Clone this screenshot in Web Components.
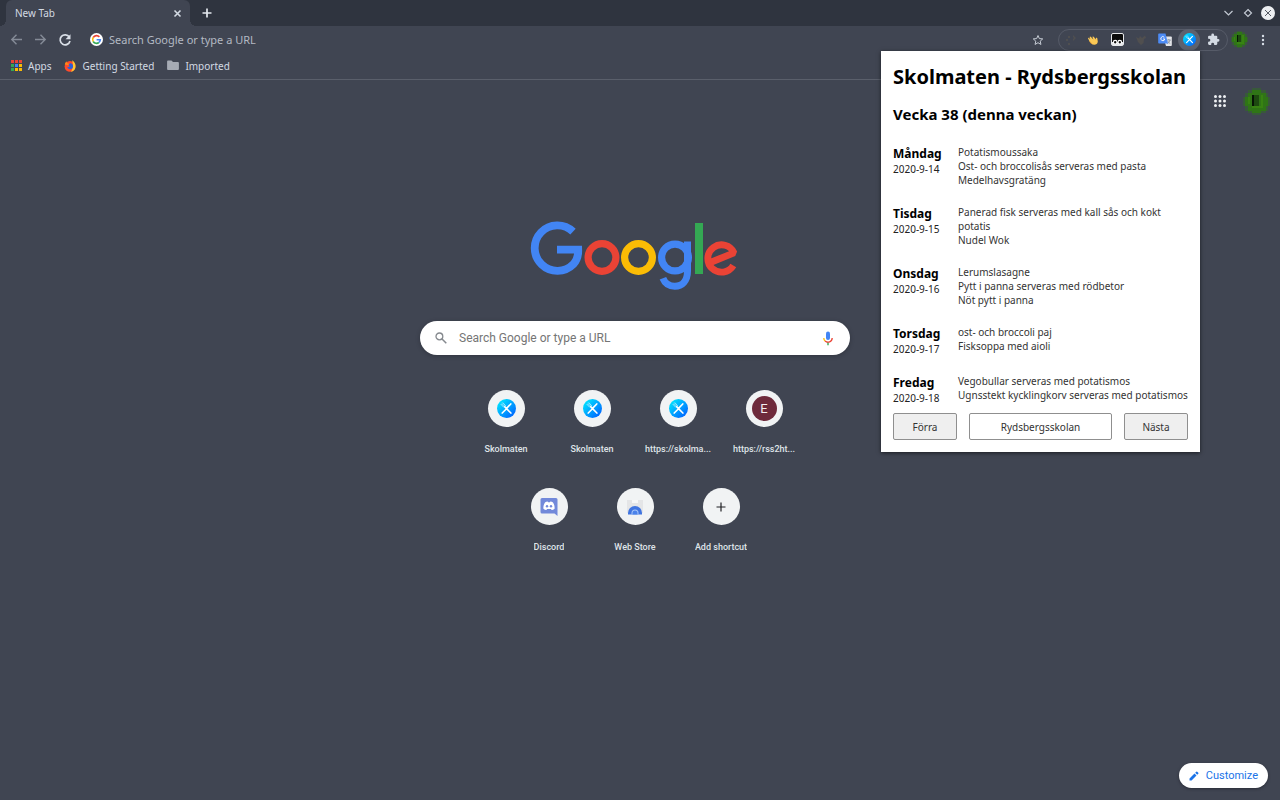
<!DOCTYPE html>
<html lang="en">
<head>
<meta charset="utf-8">
<title>New Tab</title>
<style>
  html, body { margin: 0; min-height: 100vh; }
  body {
    --bar: #404552; --frame: #2f343f; --light: #d3dae3;
    background: #404552; color: #d3dae3;
    font-family: "Noto Sans", sans-serif; font-size: 10px;
  }
</style>
</head>
<body>
<browser-window></browser-window>

<script>
const define = (name, html) => {
  const template = document.createElement('template');
  template.innerHTML = html;
  customElements.define(name, class extends HTMLElement {
    constructor() {
      super();
      this.attachShadow({ mode: 'open' }).append(template.content.cloneNode(true));
    }
  });
};

const reset = `
  :host, *, *::before, *::after { box-sizing: border-box; }
  button, input { font: inherit; color: inherit; margin: 0; padding: 0; border: 0; background: none; outline: 0; }
  button { display: inline-flex; align-items: center; justify-content: center; cursor: pointer; }
  a { color: inherit; text-decoration: none; }
  svg { display: block; flex: none; }
`;

define('pixel-avatar', `
  <style>:host { display: block; width: 18px; height: 18px; flex: none } svg { display: block; width: 100%; height: 100% }</style>
  <svg viewBox="0 0 12 12" shape-rendering="crispEdges" aria-hidden="true">
    <path fill="#38593a" d="M4 0h4v1h2v1h1v2h1v4h-1v2h-1v1H8v1H4v-1H2v-1H1V8H0V4h1V2h1V1h2z"/>
    <path fill="#2f7516" d="M4 1h4v1h2v2h1v4h-1v2H8v1H4v-1H2V8H1V4h1V2h2z"/>
    <path fill="#388312" d="M8 3h1v5H8zM4 8h5v1H4zM2 4h1v3H2z"/>
    <path fill="#1d4a10" d="M4 3h3v5H4z"/><path fill="#071506" d="M4 3h1v5H4z"/>
  </svg>`);

define('skolmaten-icon', `
  <style>:host { display: block; width: 19px; height: 19px; flex: none } svg { display: block; width: 100%; height: 100% }</style>
  <svg viewBox="0 0 20 20" aria-hidden="true">
    <defs><linearGradient id="g" x1="0" y1="0" x2="1" y2="1"><stop offset=".1" stop-color="#00e5ff"/><stop offset=".9" stop-color="#0064ff"/></linearGradient></defs>
    <circle cx="10" cy="10" r="10" fill="url(#g)"/>
    <path d="M14.5 5.200 10.500 9.400M9.200 11 5.500 14.800M8 8l6.600 6.800" stroke="#fff" stroke-width="1.700" stroke-linecap="round" fill="none"/>
    <path d="M4.200 5.600 7 8.600M5.200 4.800 8 7.600M6.300 4 9 7" stroke="#c8f4ff" stroke-width=".8" stroke-linecap="round"/>
  </svg>`);

define('tab-strip', `
  <style>${reset}
    :host { display: flex; align-items: center; height: 26px; background: var(--frame); padding: 0 5px 0 6px; }
    .tab { display: flex; align-items: center; justify-content: space-between; width: 184px; height: 26px; padding: 0 8px 0 9px;
      background: var(--bar); border-radius: 6px 6px 0 0; position: relative; }
    .tab::before, .tab::after { content: ""; position: absolute; bottom: 0; width: 6px; height: 6px; }
    .tab::before { right: 100%; background: radial-gradient(circle at 0 0, transparent 6px, var(--bar) 6px); }
    .tab::after { left: 100%; background: radial-gradient(circle at 100% 0, transparent 6px, var(--bar) 6px); }
    .new { margin-left: 11px; }
    .win { margin-left: auto; display: flex; gap: 8px; align-items: center; }
    .win button { width: 11px; }
    .win .close { width: 14px; height: 14px; border-radius: 50%; background: #eceef1; }
  </style>
  <div class="tab"><span>New Tab</span>
    <button aria-label="Close tab"><svg width="9" height="9" viewBox="0 0 9 9"><path d="M1.500 1.500l6 6m0-6l-6 6" stroke="#d3dae3" stroke-width="1.600"/></svg></button></div>
  <button class="new" aria-label="New tab"><svg width="12" height="12" viewBox="0 0 12 12"><path d="M6 1.500v9M1.500 6h9" stroke="#e3e8ee" stroke-width="1.700"/></svg></button>
  <div class="win">
    <button aria-label="Minimize"><svg width="11" height="10" viewBox="0 0 11 10"><path d="M1.500 3l4 4 4-4" fill="none" stroke="#c3c9d2" stroke-width="1.200"/></svg></button>
    <button aria-label="Maximize"><svg width="10" height="10" viewBox="0 0 10 10"><path d="M5 1.500L8.500 5 5 8.500 1.500 5z" fill="none" stroke="#c3c9d2" stroke-width="1.200"/></svg></button>
    <button class="close" aria-label="Close window"><svg width="10" height="10" viewBox="0 0 10 10"><path d="M2 2l6 6m0-6L2 8" stroke="#555a63" stroke-width="1"/></svg></button>
  </div>`);

define('tool-bar', `
  <style>${reset}
    :host { display: flex; align-items: center; height: 27px; padding: 0 10px; background: var(--bar); }
    .nav { display: flex; gap: 11px; }
    .omni { display: flex; align-items: center; flex: 1; gap: 6px; margin-left: 18px; font-size: 11px; }
    .omni input { flex: 1; min-width: 0; height: 20px; }
    .omni input::placeholder { color: #b3b9c3; opacity: 1; }
    .ext { display: flex; align-items: center; margin-left: 14px; height: 22px; padding: 0 2px; border: 1px solid #565b68; border-radius: 11px; }
    .ext button { width: 24px; height: 20px; }
    .ext button:first-child { width: 20px; }
    .ext .on { width: 22px; height: 22px; margin: 0 1px; border-radius: 50%; background: #5d626f; }
    .on skolmaten-icon { width: 13px; height: 13px; }
    pixel-avatar { width: 17px; height: 17px; }
    .me { margin-left: 3px; }
    .more { margin-left: 8px; width: 14px; }
  </style>
  <div class="nav">
    <button aria-label="Back"><svg width="13" height="13" viewBox="0 0 13 13"><path d="M12 6.500H2M6.500 1.800L1.800 6.500l4.700 4.700" fill="none" stroke="#858b97" stroke-width="1.400"/></svg></button>
    <button aria-label="Forward"><svg width="13" height="13" viewBox="0 0 13 13"><path d="M1 6.500h10M6.500 1.800l4.700 4.700-4.700 4.700" fill="none" stroke="#858b97" stroke-width="1.400"/></svg></button>
    <button aria-label="Reload"><svg width="14" height="14" viewBox="0 0 14 14"><path d="M11.300 4A5 5 0 1 0 12 8" fill="none" stroke="#d9dfe7" stroke-width="1.700"/><path d="M12.500 1.200v5h-5z" fill="#d9dfe7"/></svg></button>
  </div>
  <div class="omni">
    <svg width="13" height="13" viewBox="0 0 13 13" aria-hidden="true"><circle cx="6.500" cy="6.500" r="6.500" fill="#fff"/>
      <g fill="none" stroke-width="1.600"><path d="M9.400 3.900A3.900 3.900 0 0 0 3.200 4.500" stroke="#ea4335"/><path d="M3.200 4.500a3.900 3.900 0 0 0 0 4" stroke="#fbbc05"/><path d="M3.200 8.500a3.900 3.900 0 0 0 5.700 1" stroke="#34a853"/><path d="M8.900 9.500a3.900 3.900 0 0 0 1.400-2.800H6.600" stroke="#4285f4"/></g></svg>
    <input type="text" aria-label="Address and search bar" placeholder="Search Google or type a URL">
    <button aria-label="Bookmark this tab"><svg width="12" height="12" viewBox="0 0 24 24"><path d="M12 3l2.700 6.200 6.800.6-5.100 4.500 1.500 6.600L12 17.400l-5.900 3.500 1.500-6.600-5.100-4.500 6.800-.6z" fill="none" stroke="#c6ccd5" stroke-width="2"/></svg></button>
  </div>
  <div class="ext">
    <button aria-label="Extension"><svg width="12" height="12" viewBox="0 0 12 12" fill="#4f4f50"><path d="M8 1l3 3-3 3V5l1-1-1-1zM3 2h2v2H3zM1 5h2v2H1zM3 9h2v2H3z"/></svg></button>
    <button aria-label="Wave"><svg width="12" height="12" viewBox="0 0 12 12"><path d="M1.800 6L1 4.200c.5-.7 1-.4 1.300 0l1 1L2.600 3c.4-.8 1-.6 1.400 0l2.300 2.500L5.500 3c.4-.7 1-.5 1.400.100L8.800 5.500l.1-1.500c.9-.4 1.500.2 1.500 1l.4 2.500c-.1 2.200-1.700 3.300-3.500 3.300C5 10.800 3.300 9.500 1.800 6z" fill="#fbc855"/><path d="M2.500 7.300l2.500 2.700" stroke="#d58d2c" stroke-width=".8"/></svg></button>
    <button aria-label="Tampermonkey"><svg width="13" height="13" viewBox="0 0 13 13"><rect x=".5" y=".5" width="12" height="12" rx="1.500" fill="#0b0b0b" stroke="#e5e7ea"/><path d="M1 9h11v3H1z" fill="#e5e7ea"/><g fill="#111" stroke="#fff" stroke-width="1.200"><circle cx="4.200" cy="9.200" r="1.800"/><circle cx="8.800" cy="9.200" r="1.800"/></g></svg></button>
    <button aria-label="Extension"><svg width="12" height="12" viewBox="0 0 12 12"><path d="M1 3l3 1.500L5 2l2 2 3-2.500L11 4 9 5l-.5 4L6 11 3 8z" fill="#504f4f"/></svg></button>
    <button aria-label="Translate"><svg width="14" height="14" viewBox="0 0 14 14"><path d="M5 3.500h8a.8.8 0 0 1 .8.8v8a.8.8 0 0 1-.8.800H8z" fill="#e4e6e9"/><path d="M8.800 7h4M10.800 6v1M12 7c-.3 1.800-1.300 2.800-2.800 3.700M9.800 8c.4 1.200 1.200 2 2.500 2.700" stroke="#7c8796" stroke-width=".7" fill="none"/><path d="M1 .5h6.500L10 10.500H1a.8.8 0 0 1-.8-.8V1.300A.8.8 0 0 1 1 .5z" fill="#4c8bf5"/><path d="M6.300 4.300A2 2 0 1 0 6.800 6H5" stroke="#fff" stroke-width=".9" fill="none"/></svg></button>
    <button class="on" aria-label="Skolmaten"><skolmaten-icon></skolmaten-icon></button>
    <button aria-label="Extensions"><svg width="13" height="13" viewBox="0 0 24 24"><path fill="#d3dae3" d="M20.500 11H19V7a2 2 0 0 0-2-2h-4V3.500a2.500 2.500 0 0 0-5 0V5H4a2 2 0 0 0-2 2v3.800h1.500a2.700 2.700 0 0 1 0 5.400H2V20a2 2 0 0 0 2 2h3.800v-1.500a2.700 2.700 0 0 1 5.400 0V22H17a2 2 0 0 0 2-2v-4h1.500a2.500 2.500 0 0 0 0-5z"/></svg></button>
  </div>
  <button class="me" aria-label="Profile"><pixel-avatar></pixel-avatar></button>
  <button class="more" aria-label="Menu"><svg width="4" height="12" viewBox="0 0 4 12" fill="#d9dfe7"><circle cx="2" cy="2" r="1.200"/><circle cx="2" cy="6" r="1.200"/><circle cx="2" cy="10" r="1.200"/></svg></button>`);

define('bookmark-bar', `
  <style>${reset}
    :host { display: flex; align-items: center; gap: 13px; height: 27px; padding: 0 11px 1px; background: var(--bar); border-bottom: 1px solid #5a5f6b; }
    a { display: flex; align-items: center; gap: 6px; }
    a:first-child { gap: 7px; }
  </style>
  <a href="#apps"><svg width="11" height="11" viewBox="0 0 11 11"><path fill="#ea4335" d="M0 0h3v3H0zM4 0h3v3H4zM8 0h3v3H8z"/><path fill="#34a853" d="M0 4h3v3H0z"/><path fill="#4285f4" d="M4 4h3v3H4z"/><path fill="#fbbc05" d="M8 4h3v3H8zM4 8h3v3H4zM8 8h3v3H8z"/><path fill="#34a853" d="M0 8h3v3H0z"/></svg>Apps</a>
  <a href="#start"><svg width="12" height="12" viewBox="0 0 12 12"><circle cx="6" cy="6.400" r="5.400" fill="#ff4a2a"/><path d="M8 .3c2.600 1.500 4 4 3.500 7A5.600 5.600 0 0 1 7 11.800C9 9 9.500 4 8 .3z" fill="#ffc52f"/><path d="M6 3.200a3 3 0 1 1-2.900 3.600c1 .6 2 .3 2.700-.5L4.500 5z" fill="#2b5fd9"/><path d="M.8 4.500C1 2.800 2 1.700 2.600 1.400L3 3l2 .8-.8 1.400z" fill="#ff8a16"/></svg>Getting Started</a>
  <a href="#imported"><svg width="12" height="11" viewBox="0 0 12 11"><path d="M1 .5h3.500L6 2h5a.9.9 0 0 1 .9.900v6.200a.9.900 0 0 1-.9.900H1a.9.900 0 0 1-.9-.9V1.400A.9.900 0 0 1 1 .5z" fill="#a6abb4"/></svg>Imported</a>`);

define('google-logo', `
  <style>:host { display: block } svg { display: block }</style>
  <svg width="208" height="70" viewBox="0 0 208 70" fill="none" role="img" aria-label="Google">
    <path d="M43 10.600A22.700 22.700 0 1 0 43.600 43Q48.500 37.500 48.200 28.600H27" stroke="#4285f4" stroke-width="7.800"/>
    <circle cx="72" cy="36.500" r="13.900" stroke="#ea4335" stroke-width="7.200"/>
    <circle cx="108.500" cy="36.500" r="13.900" stroke="#fbbc05" stroke-width="7.200"/>
    <circle cx="145" cy="36.500" r="13.400" stroke="#4285f4" stroke-width="7.200"/>
    <path d="M157.500 20.500V50c0 10-5.500 15.300-12.700 15.300-6 0-10-3.300-11.900-8" stroke="#4285f4" stroke-width="7"/>
    <path d="M165 2h8v51h-8z" fill="#34a853"/>
    <path d="M203.300 44.500A13.700 13.700 0 1 1 204 31.800L181.500 41" stroke="#ea4335" stroke-width="6.800" stroke-linejoin="bevel"/>
  </svg>`);

define('search-box', `
  <style>${reset}
    :host { display: flex; align-items: center; width: 430px; max-width: 100%; height: 34px; padding: 0 16px 0 15px; border-radius: 17px;
      background: #fff; box-shadow: 0 1px 4px rgba(20,22,30,.35); font-family: Roboto, sans-serif; font-size: 12px; color: #333; }
    input { flex: 1; min-width: 0; height: 30px; margin: 0 12px; }
    input::placeholder { color: #757575; opacity: 1; }
  </style>
  <svg width="12" height="12" viewBox="0 0 12 12" aria-hidden="true"><circle cx="4.400" cy="4.400" r="3.400" fill="none" stroke="#85898e" stroke-width="1.300"/><path d="M7 7l4.300 4.300" stroke="#85898e" stroke-width="1.500"/></svg>
  <input type="search" aria-label="Search" placeholder="Search Google or type a URL">
  <button aria-label="Search by voice"><svg width="12" height="15" viewBox="0 0 12 15"><rect x="4" y="0.500" width="4" height="8.500" rx="2" fill="#4285f4"/><path d="M1.800 7a4.200 4.200 0 0 0 1.300 3" fill="none" stroke="#fbbc05" stroke-width="1.300"/><path d="M3.100 10a4.200 4.200 0 0 0 7.100-3" fill="none" stroke="#ea4335" stroke-width="1.300"/><path d="M5.300 11.800h1.400v2.400H5.300z" fill="#34a853"/></svg></button>`);

define('shortcut-tile', `
  <style>${reset}
    :host { display: block; width: 86px; }
    a { display: flex; flex-direction: column; align-items: center; gap: 15px; font: 500 9px/14px Roboto, sans-serif; color: #dfe3e8; }
    .disc { display: grid; place-items: center; width: 37px; height: 37px; border-radius: 50%; background: #f1f3f4; }
    .label { max-width: 70px; white-space: nowrap; overflow: hidden; text-overflow: ellipsis; }
  </style>
  <a href="#shortcut"><span class="disc"><slot name="icon"></slot></span><span class="label"><slot></slot></span></a>`);

define('new-tab-page', `
  <style>${reset}
    :host { display: flex; flex-direction: column; flex: 1; padding: 7px 10px 12px 0; }
    header { display: flex; align-items: center; justify-content: flex-end; gap: 16px; height: 28px; }
    header pixel-avatar { width: 27px; height: 27px; }
    main { display: flex; flex-direction: column; align-items: center; padding: 106px 0 40px; }
    google-logo { margin-right: 2px; }
    search-box { margin: 30px 0 35px; }
    .row { display: flex; justify-content: center; }
    .row + .row { margin-top: 32px; }
    .e { display: grid; place-items: center; width: 25px; height: 25px; border-radius: 50%; background: #6e2a3b; color: #f3eef0; font: 400 13px/25px Roboto, sans-serif; }
    footer { display: flex; justify-content: flex-end; margin-top: auto; padding-right: 2px; }
    .custom { height: 25px; padding: 0 10px; gap: 7px; border-radius: 13px; background: #fff; color: #1a73e8;
      font: 400 11px/25px Roboto, sans-serif; box-shadow: 0 1px 3px rgba(20,22,30,.5); }
  </style>
  <header>
    <button aria-label="Google apps"><svg width="14" height="14" viewBox="0 0 14 14" fill="#eef0f3"><circle cx="2.500" cy="2.500" r="1.500"/><circle cx="7" cy="2.500" r="1.500"/><circle cx="11.500" cy="2.500" r="1.500"/><circle cx="2.500" cy="7" r="1.500"/><circle cx="7" cy="7" r="1.500"/><circle cx="11.500" cy="7" r="1.500"/><circle cx="2.500" cy="11.500" r="1.500"/><circle cx="7" cy="11.500" r="1.500"/><circle cx="11.500" cy="11.500" r="1.500"/></svg></button>
    <button aria-label="Google account"><pixel-avatar></pixel-avatar></button>
  </header>
  <main>
    <google-logo></google-logo>
    <search-box></search-box>
    <div class="row">
      <shortcut-tile><skolmaten-icon slot="icon"></skolmaten-icon>Skolmaten</shortcut-tile>
      <shortcut-tile><skolmaten-icon slot="icon"></skolmaten-icon>Skolmaten</shortcut-tile>
      <shortcut-tile><skolmaten-icon slot="icon"></skolmaten-icon>https://skolma...</shortcut-tile>
      <shortcut-tile><span slot="icon" class="e">E</span>https://rss2ht...</shortcut-tile>
    </div>
    <div class="row">
      <shortcut-tile><svg slot="icon" width="18" height="20" viewBox="0 0 18 20"><path d="M2 1h14a1.500 1.500 0 0 1 1.500 1.500V19l-3-2.500H2A1.500 1.500 0 0 1 .5 15V2.500A1.500 1.500 0 0 1 2 1z" fill="#7289da"/><path d="M5 5.500c1-.7 2-1 2.600-1l.4.700h2l.4-.7c.6 0 1.600.3 2.600 1 1.300 2 1.800 4 1.600 6.300-1 .8-2 1.200-2.900 1.200l-.8-1.100H7.100l-.8 1.100c-.9 0-1.900-.4-2.900-1.200C3.200 9.500 3.700 7.500 5 5.500z" fill="#fff"/><circle cx="7" cy="9.200" r="1.200" fill="#7289da"/><circle cx="11" cy="9.200" r="1.200" fill="#7289da"/></svg>Discord</shortcut-tile>
      <shortcut-tile><svg slot="icon" width="16" height="16" viewBox="0 0 16 16"><path d="M0 1h16v13H0z" fill="#e4e5e7"/><path d="M5 1h6v3H5z" fill="#f6f7f8"/><path d="M1 15.500V14a7 7 0 0 1 14 0v1.500z" fill="#3f74e0"/><path d="M4.500 15.500V14a3.500 3.500 0 0 1 7 0v1.500z" fill="#a9c6f8"/><path d="M5.500 15.500V14a2.500 2.500 0 0 1 5 0v1.500z" fill="#4a82ea"/></svg>Web Store</shortcut-tile>
      <shortcut-tile><svg slot="icon" width="10" height="10" viewBox="0 0 10 10"><path d="M5 .5v9M.5 5h9" stroke="#202124" stroke-width="1.200"/></svg>Add shortcut</shortcut-tile>
    </div>
  </main>
  <footer><button class="custom"><svg width="10" height="10" viewBox="0 0 10 10" fill="#1a73e8"><path d="M.5 7.500v2h2l5-5-2-2zM6.200 1.800l2 2 1.100-1.100a.7.700 0 0 0 0-.9L8.200.7a.7.700 0 0 0-.9 0z"/></svg>Customize</button></footer>`);

define('menu-day', `
  <style>${reset}
    :host { display: flex; }
    .when { flex: 0 0 65px; }
    ::slotted([slot=day]) { margin: 0; font-size: 12px; line-height: 17px; font-weight: 700; color: #000; }
    ::slotted([slot=date]) { display: block; font-size: 10px; line-height: 14px; color: #222; }
    ul { margin: 0; padding: 0; list-style: none; flex: 1; min-width: 0; line-height: 14px; }
  </style>
  <div class="when"><slot name="day"></slot><slot name="date"></slot></div><ul><slot></slot></ul>`);

define('skolmaten-popup', `
  <style>${reset}
    :host { display: block; width: 319px; padding: 12px; background: #fff; color: #333; font-size: 10px; box-shadow: 0 1px 4px rgba(0,0,0,.6); }
    h1 { margin: 0; font-size: 20px; line-height: 28px; color: #000; white-space: nowrap; }
    h2 { margin: 12px 0 20px; font-size: 15px; line-height: 22px; color: #000; }
    .days { display: flex; flex-direction: column; gap: 18px; }
    .bar { display: flex; gap: 12px; margin-top: 8px; }
    .bar > * { height: 27px; border: 1px solid #8f8f8f; border-radius: 2px; }
    .bar button { flex: 0 0 64px; background: #efefef; }
    .bar input { flex: 1; min-width: 0; text-align: center; }
  </style>
  <h1>Skolmaten - Rydsbergsskolan</h1>
  <h2>Vecka 38 (denna veckan)</h2>
  <div class="days">
    <menu-day><h3 slot="day">Måndag</h3><time slot="date">2020-9-14</time><li>Potatismoussaka</li><li>Ost- och broccolisås serveras med pasta</li><li>Medelhavsgratäng</li></menu-day>
    <menu-day><h3 slot="day">Tisdag</h3><time slot="date">2020-9-15</time><li>Panerad fisk serveras med kall sås och kokt potatis</li><li>Nudel Wok</li></menu-day>
    <menu-day><h3 slot="day">Onsdag</h3><time slot="date">2020-9-16</time><li>Lerumslasagne</li><li>Pytt i panna serveras med rödbetor</li><li>Nöt pytt i panna</li></menu-day>
    <menu-day><h3 slot="day">Torsdag</h3><time slot="date">2020-9-17</time><li>ost- och broccoli paj</li><li>Fisksoppa med aioli</li></menu-day>
    <menu-day><h3 slot="day">Fredag</h3><time slot="date">2020-9-18</time><li>Vegobullar serveras med potatismos</li><li>Ugnsstekt kycklingkorv serveras med potatismos</li></menu-day>
  </div>
  <div class="bar"><button>Förra</button><input type="text" aria-label="Skola" value="Rydsbergsskolan"><button>Nästa</button></div>`);

define('browser-window', `
  <style>
    :host { display: flex; flex-direction: column; min-height: 100vh; position: relative; }
    skolmaten-popup { position: absolute; top: 51px; right: 80px; z-index: 1; }
  </style>
  <tab-strip></tab-strip>
  <tool-bar></tool-bar>
  <bookmark-bar></bookmark-bar>
  <new-tab-page></new-tab-page>
  <skolmaten-popup></skolmaten-popup>`);
</script>
</body>
</html>
